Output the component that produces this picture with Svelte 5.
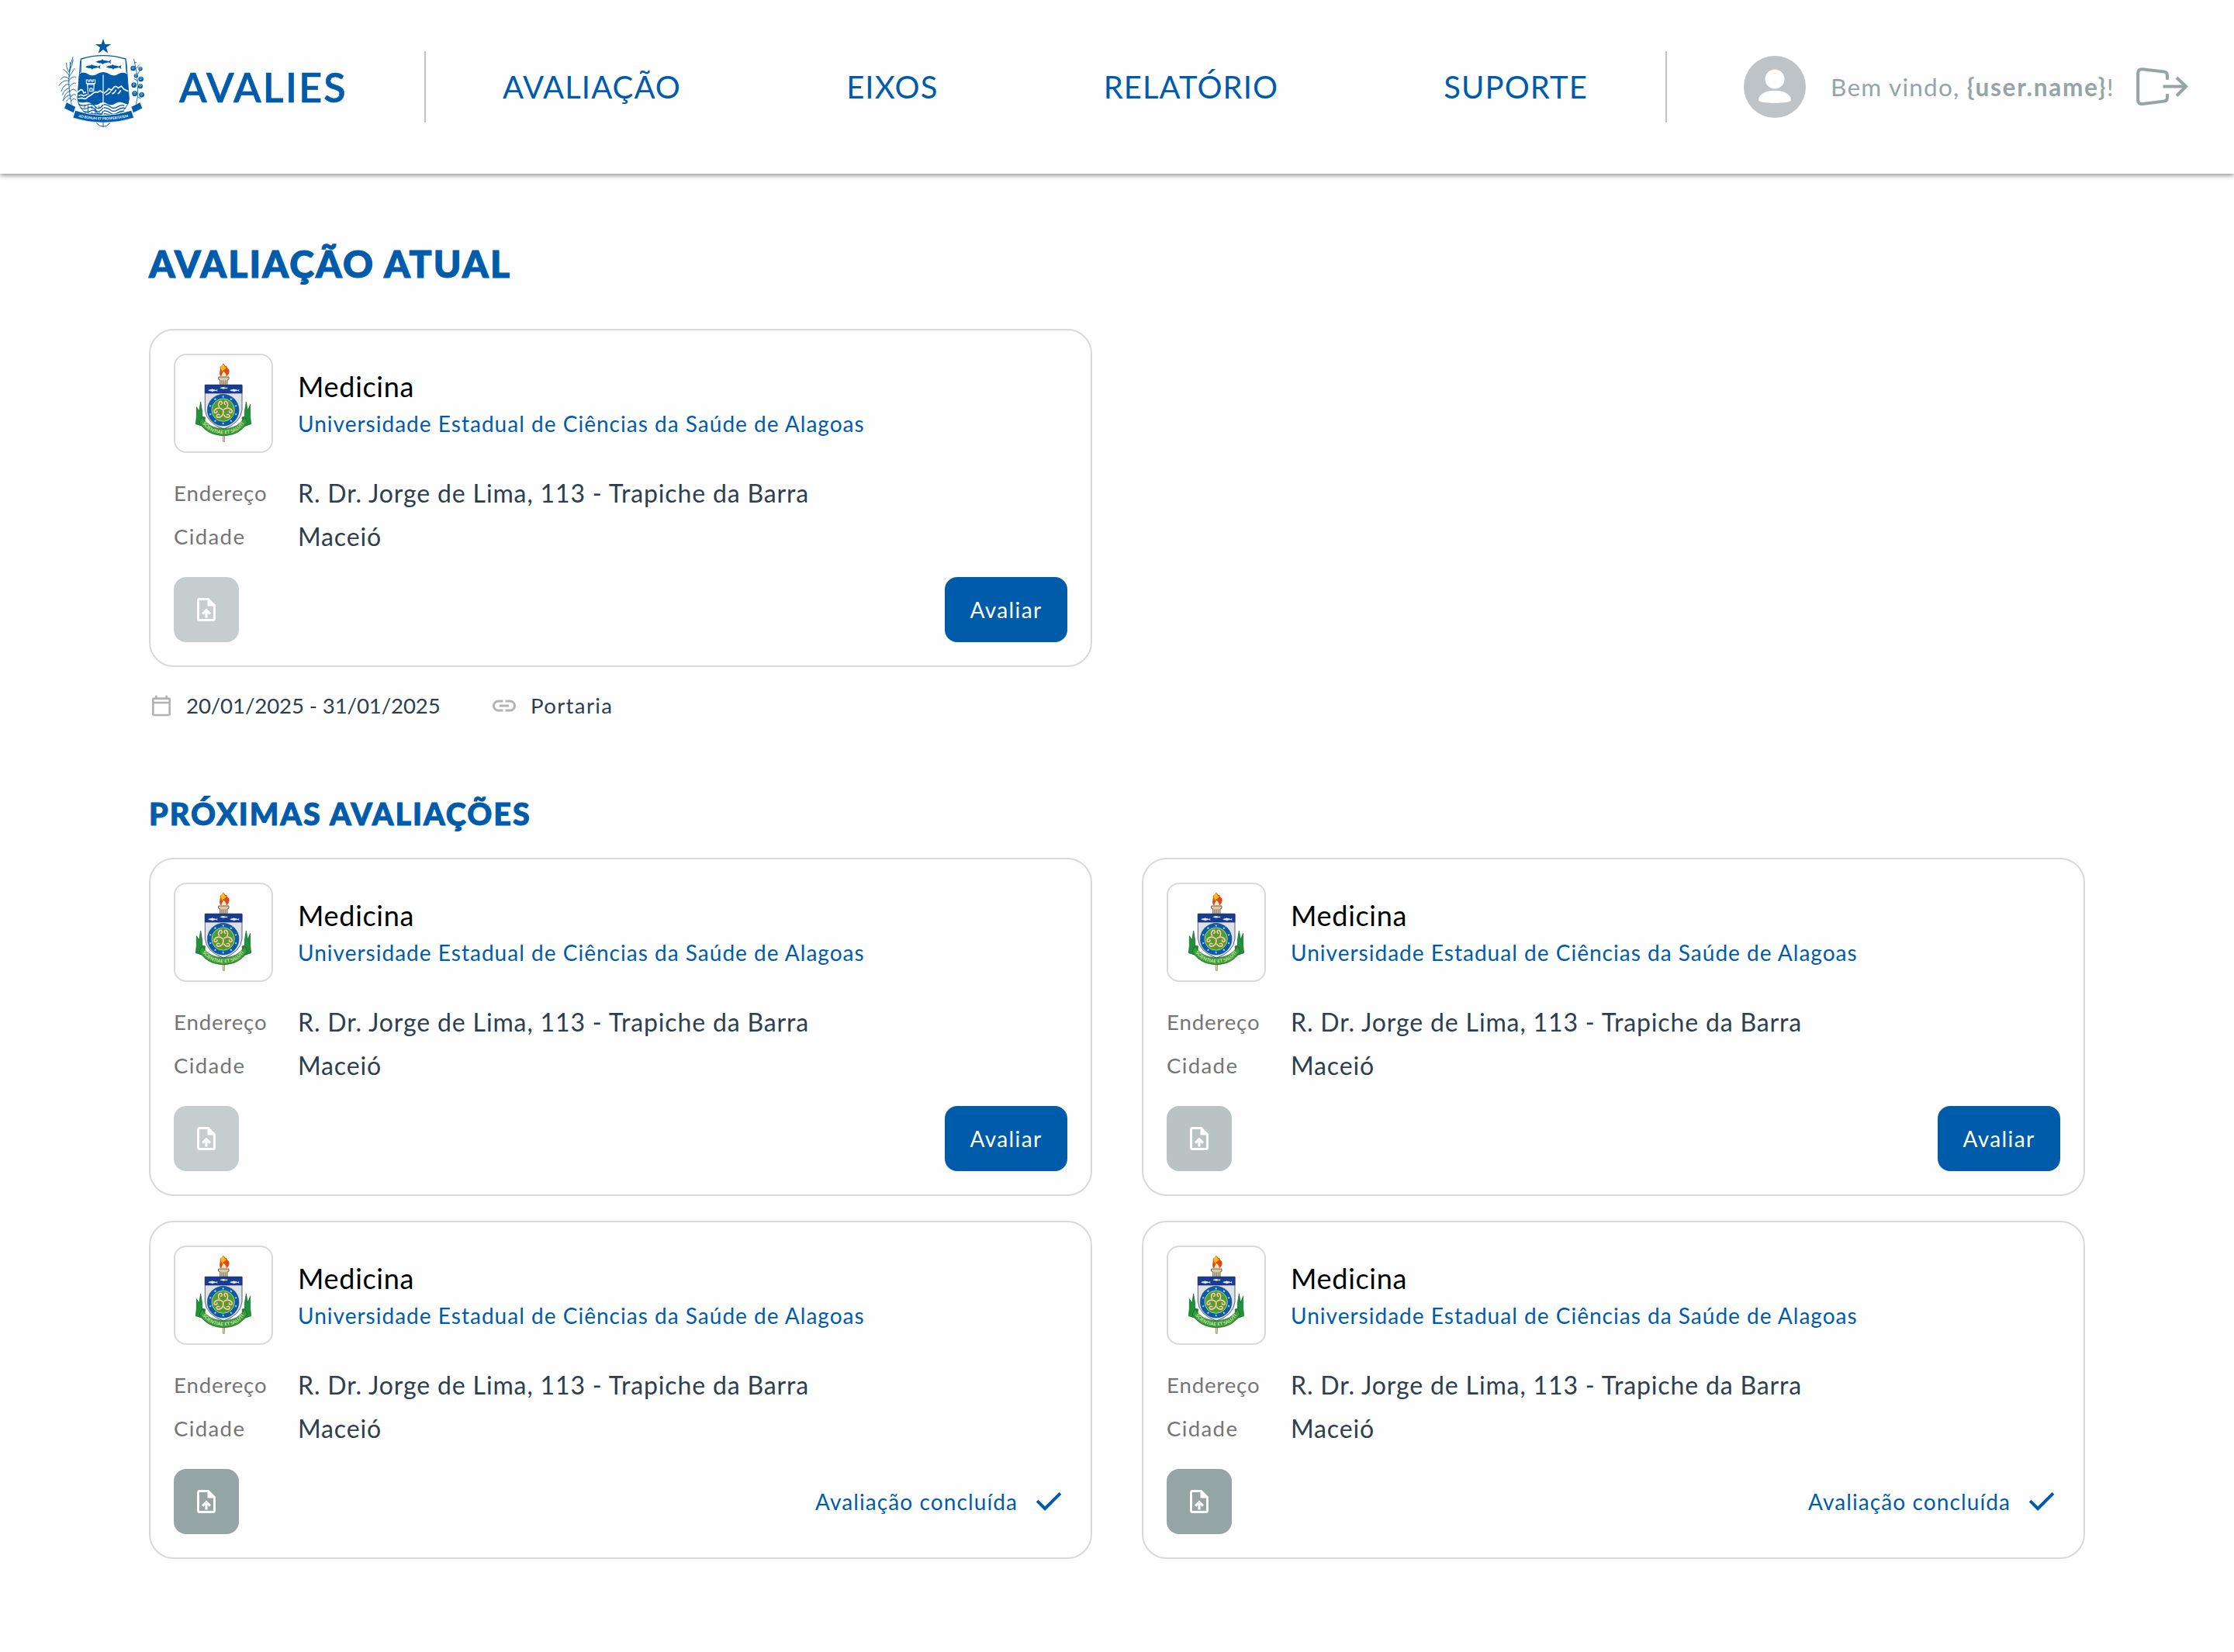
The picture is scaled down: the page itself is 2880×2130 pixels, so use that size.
<script>
  const navItems = ['AVALIAÇÃO', 'EIXOS', 'RELATÓRIO', 'SUPORTE'];

  const base = {
    course: 'Medicina',
    school: 'Universidade Estadual de Ciências da Saúde de Alagoas',
    address: 'R. Dr. Jorge de Lima, 113 - Trapiche da Barra',
    city: 'Maceió',
  };
  const current = { ...base, done: false, tone: 'light' };
  const upcoming = [
    { ...base, done: false, tone: 'light' },
    { ...base, done: false, tone: 'mid' },
    { ...base, done: true, tone: 'full' },
    { ...base, done: true, tone: 'full' },
  ];

  // Ring of small stars on the school crest
  const ringStars = Array.from({ length: 10 }, (_, i) => {
    const a = ((i * 36 - 90) * Math.PI) / 180;
    return [323 + 52 * Math.cos(a), 716 + 52 * Math.sin(a)];
  });
  const cottonBolls = [
    [334, 173, 10], [362, 175, 8], [345, 202, 8], [364, 215, 10], [337, 238, 10],
    [362, 243, 9], [340, 271, 10], [367, 276, 10],
  ];
</script>

{#snippet fish(x, y, s)}
  <path
    transform="translate({x} {y}) scale({s})"
    d="M-30 0Q-20-6-8-6L-5-10L1-6Q12-5 20-2L30-8L27 0L30 8L20 2Q12 5 2 6L-3 10L-6 6Q-20 6-30 0Z"
  />
{/snippet}

{#snippet stateCrest()}
  <svg class="state-crest" viewBox="44 56 336 348" aria-hidden="true">
    <g fill="#005caa">
      <path d="M218 58L225 80H249L230 93L237 115L218 101L199 115L206 93L188 80H211Z" />
      {@render fish(219, 148, 1)}
      {@render fish(178, 168, 1)}
      {@render fish(259, 168, 1)}
      <path d="M125 197Q134 188 145 190C160 192 164 202 178 201C194 200 200 188 218 188C236 188 242 200 258 201C272 202 278 190 292 190Q304 189 311 197L318 290L316 312C300 312 294 303 280 304C264 305 262 315 248 315C234 315 232 305 218 305C204 305 202 315 188 315C174 315 172 305 158 304C144 303 138 310 122 302L118 290Z" />
    </g>
    <path d="M131 190L132 137Q218 111 305 137L309 190" fill="none" stroke="#005caa" stroke-width="4" />
    <path d="M130 145L119 290Q124 350 218 382Q312 350 318 290L307 145" fill="none" stroke="#005caa" stroke-width="3" />
    <g fill="none" stroke="#fff" stroke-width="3.5">
      <path d="M218 198V350" />
      <path d="M153 218H160V224H166V218H173V224H179V218H187V232H153ZM157 233L160 276M183 233L181 262M157 236H185" />
      <path d="M166 262V253Q171 247 176 253V262Z" />
      <path d="M118 266L132 256Q140 256 142 268L152 266M122 280Q134 272 142 280L156 274M120 290L136 288Q150 296 158 284L172 276Q186 262 196 266L206 260L218 268" stroke-width="5" />
      <path d="M220 270Q234 262 240 252L250 258L262 244Q270 240 276 250L288 242L298 254L315 262M228 276Q240 272 248 262M252 272Q262 270 268 256M274 272Q282 268 286 258" stroke-width="5" />
    </g>
    <g fill="none" stroke="#005caa" stroke-width="4">
      <path d="M122 312Q140 322 158 314T188 322T218 314M130 326Q146 334 160 326T188 334T218 326M142 340Q158 346 170 338T196 346T218 338M156 350H216" />
      <path d="M146 314V326M160 316V350M174 318V330M188 322V352M202 318V330M174 342V354M203 342V354" stroke-width="3" />
      <path d="M220 314Q234 312 246 322T274 322T300 318M220 326Q234 324 246 334T274 334T304 328M220 338Q234 336 246 346T274 346T298 340M220 350Q236 348 250 356" />
      <path d="M192 385Q204 398 218 399Q232 398 245 385M218 382V399" stroke-width="3" />
    </g>
    <g fill="none" stroke="#005caa" stroke-width="2.6" stroke-linecap="round">
      <path d="M96 314Q82 250 86 200Q88 160 101 130" />
      <path d="M86 200Q72 180 64 178M88 190Q92 160 90 150M86 214Q66 196 54 216M87 222Q64 214 47 240M86 206Q104 180 107 174M87 218Q104 200 113 208M87 236Q70 226 56 262M88 244Q108 222 112 232M88 250Q70 250 60 276M90 262Q72 262 64 296M90 262Q104 246 114 262M92 276Q78 276 62 298M93 284Q104 268 112 276M95 298Q104 284 113 296M84 186Q74 168 76 152M88 182Q100 158 102 140M92 290Q84 286 76 300" />
      <path d="M345 314Q356 280 352 240Q350 190 337 138M352 250L366 238M351 222L338 214M350 196L364 178M353 284L362 290M347 172L358 160M340 152L346 150" />
    </g>
    {#each cottonBolls as [x, y, r]}
      <circle cx={x} cy={y} r={r} fill="#005caa" />
      <path d="M{x - 5} {y - 3}Q{x} {y - 8} {x + 5} {y - 2}M{x - 4} {y + 2}L{x + 2} {y + 1}" fill="none" stroke="#fff" stroke-width="2" />
    {/each}
    <g fill="#005caa" stroke="#fff" stroke-width="2">
      <path d="M76 304L112 322L104 346L67 328Z" />
      <path d="M361 304L326 322L334 346L370 328Z" />
      <path d="M110 336Q218 374 327 336L337 365Q218 402 101 365Z" />
    </g>
    <path id="state-motto" d="M120 361Q218 384 318 361" fill="none" />
    <text fill="#fff" font-size="14" font-weight="700" textLength="194" lengthAdjust="spacingAndGlyphs">
      <textPath href="#state-motto" startOffset="3">AD BONUM ET PROSPERITATEM</textPath>
    </text>
  </svg>
{/snippet}

{#snippet schoolCrest()}
  <svg class="school-crest" viewBox="132 498 384 384" aria-hidden="true">
    <path d="M321 770H329L328 838H322Z" fill="#e9d9b4" stroke="#75694c" stroke-width="2" />
    <path d="M312 585C306 568 313 564 311 551C314 542 320 548 322 536C332 541 329 548 337 545C335 555 349 555 347 567C346 577 340 582 336 586Z" fill="#dd4a16" />
    <path d="M314 556C312 545 318 544 323 539C330 543 327 551 334 550C334 563 323 557 320 569Z" fill="#fdb913" />
    <path d="M316 586Q317 575 325 566Q337 576 335 586Z" fill="#fbe3c0" />
    <path d="M305 588H345V597L339 600V621H311V600L305 597Z" fill="#d9c9a4" stroke="#544a38" stroke-width="2.5" />
    <path d="M318 601V620M325 601V620M332 601V620" stroke="#6c604a" stroke-width="2.5" />
    <path d="M253 619H396V715Q392 765 325 790Q257 765 253 715Z" fill="#dfe1e5" stroke="#3d4557" stroke-width="2.5" />
    <path d="M253 619H396V651H253Z" fill="#183b94" stroke="#1b2b5f" stroke-width="2" />
    <g fill="#e9edf3">
      {@render fish(283, 640, 0.62)}
      {@render fish(325, 631, 0.5)}
      {@render fish(367, 640, 0.62)}
    </g>
    <circle cx="323" cy="716" r="61" fill="#0a5ca5" stroke="#083c78" stroke-width="1.5" />
    {#each ringStars as [x, y]}
      <path
        transform="translate({x} {y}) scale(0.8)"
        d="M0-6L1.5-2H6L2.5 1L4 5.500L0 3L-4 5.500L-2.500 1L-6-2H-1.500Z"
        fill="#cfe6f6"
      />
    {/each}
    <circle cx="323" cy="716" r="44" fill="#4aa22e" stroke="#e3ecd8" stroke-width="2" />
    {#each [0, 120, 240] as turn}
      <g transform="rotate({turn} 323 716)" fill="none" stroke-linecap="round">
        <path d="M323 716C304 710 301 692 310 683C319 679 322 692 314 694M323 716C342 710 345 692 336 683C327 679 324 692 332 694" stroke="#83672f" stroke-width="7" />
        <path d="M323 716C304 710 301 692 310 683C319 679 322 692 314 694M323 716C342 710 345 692 336 683C327 679 324 692 332 694" stroke="#ecd6a4" stroke-width="5" />
      </g>
    {/each}
    <g stroke="#0d5a26" stroke-width="2" fill="#21913b">
      <path d="M220 742V704L230 720L236 684L242 722V742L254 744L248 780L217 770Z" />
      <path d="M428 742V694L418 718L412 684L406 722V742L396 744L402 780L431 770Z" />
      <path d="M241 743Q267 788 325 788Q381 788 407 743L416 765Q386 815 325 815Q262 815 231 765Z" fill="#3c9c38" />
    </g>
    <path id="school-motto" d="M241 765Q270 808 325 808Q380 808 409 761" fill="none" />
    <text fill="#c9e8a0" font-size="18" font-weight="700" textLength="186" lengthAdjust="spacingAndGlyphs">
      <textPath href="#school-motto" startOffset="4">SCIENTIAE ET SALUTI</textPath>
    </text>
  </svg>
{/snippet}

{#snippet card(item)}
  <article class="card">
    <div class="card-head">
      <div class="crest-box">{@render schoolCrest()}</div>
      <div class="titles">
        <h3>{item.course}</h3>
        <p>{item.school}</p>
      </div>
    </div>
    <dl>
      <dt>Endereço</dt>
      <dd>{item.address}</dd>
      <dt class="city">Cidade</dt>
      <dd>{item.city}</dd>
    </dl>
    <div class="card-foot">
      <button class="upload {item.tone}" aria-label="Enviar arquivo">
        <svg viewBox="0 0 24 24" width="36" height="36" fill="#fff">
          <path d="M14 2H6c-1.100 0-1.990.9-1.990 2L4 20c0 1.100.89 2 1.990 2H18c1.100 0 2-.9 2-2V8l-6-6zm4 18H6V4h7v5h5v11zM8 15.010l1.410 1.410L11 14.840V19h2v-4.160l1.590 1.590L16 15.010 12.010 11z" />
        </svg>
      </button>
      {#if item.done}
        <div class="done">
          <span>Avaliação concluída</span>
          <svg viewBox="0 -960 960 960" width="48" height="48" fill="#005caa">
            <path d="M382-240 154-468l57-57 171 171 367-367 57 57-424 424Z" />
          </svg>
        </div>
      {:else}
        <button class="evaluate">Avaliar</button>
      {/if}
    </div>
  </article>
{/snippet}

<header>
  <div class="brand">
    {@render stateCrest()}
    <span>AVALIES</span>
  </div>
  <i class="divider"></i>
  <nav>
    {#each navItems as item}
      <a href="#top">{item}</a>
    {/each}
  </nav>
  <i class="divider"></i>
  <div class="user">
    <svg class="avatar" viewBox="0 0 80 80">
      <circle cx="40" cy="40" r="40" fill="#bdc3c7" />
      <circle cx="40" cy="30" r="12.500" fill="#fff" />
      <path d="M19 57.500C19 49 29 44.700 40 44.700S61 49 61 57.500C61 59.500 51 60.800 40 60.800S19 59.500 19 57.500Z" fill="#fff" />
    </svg>
    <p>Bem vindo, <b>{'{user.name}'}</b>!</p>
    <svg class="logout" viewBox="0 0 68 50" fill="none" stroke="#95a5a6" stroke-width="4">
      <path d="M40 15.700V10.200Q40 6 36 5.500L8 2.300Q2.200 1.800 2.200 7.500V41.800Q2.200 47.500 8 47L36 43.600Q40 43.200 40 39V34" />
      <path d="M34.500 24.600H64M52 13L64 24.600L52 36.500" />
    </svg>
  </div>
</header>

<main>
  <h1>AVALIAÇÃO ATUAL</h1>
  <div class="grid">{@render card(current)}</div>
  <div class="meta">
    <svg viewBox="0 -960 960 960" width="32" height="32" fill="#b3b3b3">
      <path d="M200-80q-33 0-56.500-23.500T120-160v-560q0-33 23.500-56.500T200-800h40v-80h80v80h320v-80h80v80h40q33 0 56.500 23.500T840-720v560q0 33-23.500 56.500T760-80H200Zm0-80h560v-400H200v400Zm0-480h560v-80H200v80Z" />
    </svg>
    <span class="dates">20/01/2025 - 31/01/2025</span>
    <svg viewBox="0 -960 960 960" width="36" height="36" fill="#b3b3b3">
      <path d="M440-280H280q-83 0-141.500-58.500T80-480q0-83 58.500-141.500T280-680h160v80H280q-50 0-85 35t-35 85q0 50 35 85t85 35h160v80ZM320-440v-80h320v80H320Zm200 160v-80h160q50 0 85-35t35-85q0-50-35-85t-85-35H520v-80h160q83 0 141.500 58.500T880-480q0 83-58.500 141.500T680-280H520Z" />
    </svg>
    <span class="doc">Portaria</span>
  </div>

  <h2>PRÓXIMAS AVALIAÇÕES</h2>
  <div class="grid">
    {#each upcoming as item}
      {@render card(item)}
    {/each}
  </div>
</main>

<style>
  :global(body) {
    margin: 0;
    background: #fefefe;
    font-family: Lato, 'Open Sans', sans-serif;
  }
  h1, h2, h3, p, dl, dd { margin: 0; }
  svg { display: block; flex: none; }
  button { border: 0; padding: 0; font: inherit; }

  header {
    display: flex;
    align-items: center;
    box-sizing: border-box;
    height: 224px;
    background: #fefefe;
    box-shadow: 0 2px 6px rgba(0, 0, 0, 0.45);
  }
  .brand {
    display: flex;
    align-items: center;
    gap: 44px;
    box-sizing: border-box;
    width: 547px;
    padding-left: 75px;
  }
  .state-crest { width: 112px; height: 116px; margin-top: -10px; }
  .brand span {
    padding-bottom: 1px;
    color: #005caa;
    font-size: 52px;
    font-weight: 600;
    letter-spacing: 2.2px;
    line-height: 64px;
    -webkit-text-stroke: 0.6px #005caa;
  }
  .divider { width: 2px; height: 92px; background: #bdc3c7; }
  nav {
    display: flex;
    flex: 1;
    justify-content: space-between;
    padding: 0 100px 1px 99px;
  }
  nav a {
    color: #005caa;
    font-size: 40px;
    letter-spacing: 1.1px;
    line-height: 50px;
    text-decoration: none;
    white-space: nowrap;
  }
  .user {
    display: flex;
    align-items: center;
    box-sizing: border-box;
    width: 731px;
    padding-left: 99px;
    color: #95a5a6;
  }
  .avatar { width: 80px; height: 80px; }
  .user p {
    width: 394px;
    padding: 0 0 1px 32px;
    font-size: 31.5px;
    letter-spacing: 1.25px;
    line-height: 40px;
    white-space: nowrap;
  }
  .user b { font-weight: 700; letter-spacing: 1.75px; }
  .logout { width: 68px; height: 50px; }

  main { padding: 86px 192px 0; }
  h1 {
    margin-bottom: 54px;
    color: #005caa;
    font-size: 48px;
    font-weight: 900;
    letter-spacing: 2.25px;
    line-height: 60px;
    -webkit-text-stroke: 1.2px #005caa;
  }
  h2 {
    margin: 96px 0 32px;
    color: #005caa;
    font-size: 39.5px;
    font-weight: 900;
    letter-spacing: 2px;
    line-height: 50px;
    -webkit-text-stroke: 1px #005caa;
  }
  .grid {
    display: grid;
    grid-template-columns: 1fr 1fr;
    gap: 32px 64px;
  }

  .card {
    box-sizing: border-box;
    height: 436px;
    padding: 30px;
    border: 2px solid #d9d9d9;
    border-radius: 32px;
  }
  .card-head { display: flex; gap: 32px; }
  .crest-box {
    box-sizing: border-box;
    width: 128px;
    height: 128px;
    border: 2px solid #d9d9d9;
    border-radius: 16px;
  }
  .school-crest { width: 128px; height: 128px; margin: -2px; }
  .titles { padding-top: 21px; }
  h3 {
    margin-bottom: 10px;
    color: #000;
    font-size: 36px;
    font-weight: 400;
    letter-spacing: 0.7px;
    line-height: 42px;
  }
  .titles p {
    color: #005caa;
    font-size: 28px;
    letter-spacing: 1.02px;
    line-height: 35px;
  }
  dl {
    display: grid;
    grid-template-columns: 160px 1fr;
    row-gap: 16px;
    align-items: center;
    margin: 32px 0;
  }
  dt {
    color: #757575;
    font-size: 27.6px;
    letter-spacing: 0.85px;
    line-height: 40px;
  }
  .city { letter-spacing: 1.35px; }
  dd {
    color: #2c3e50;
    font-size: 32px;
    letter-spacing: 0.86px;
    line-height: 40px;
  }
  .card-foot {
    display: flex;
    align-items: center;
    justify-content: space-between;
  }
  .upload {
    display: flex;
    align-items: center;
    justify-content: center;
    width: 84px;
    height: 84px;
    border-radius: 16px;
  }
  .light { background: #c5cdce; }
  .mid { background: #b9c3c4; }
  .full { background: #95a5a6; }
  .evaluate {
    width: 158px;
    height: 84px;
    border-radius: 16px;
    background: #005caa;
    color: #fff;
    font-size: 28px;
    letter-spacing: 1.4px;
  }
  .done {
    display: flex;
    align-items: center;
    gap: 16px;
    color: #005caa;
    font-size: 28px;
    letter-spacing: 1.1px;
  }

  .meta {
    display: flex;
    align-items: center;
    height: 36px;
    margin-top: 32px;
    color: #2c3e50;
    font-size: 27.6px;
    line-height: 36px;
  }
  .dates { width: 392px; margin-left: 16px; letter-spacing: -0.12px; }
  .doc { margin-left: 16px; letter-spacing: 1.35px; }
</style>
